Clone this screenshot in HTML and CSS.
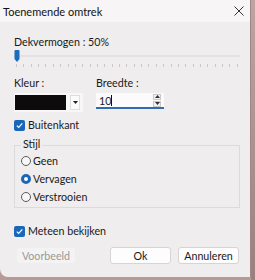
FILE: index.html
```html
<!DOCTYPE html>
<html lang="nl">
<head>
  <meta charset="UTF-8" />
  <title>Toenemende omtrek</title>
  <link rel="stylesheet" href="styles.css">
</head>
<body>
  <div class="screen">
    <div class="dialog">
      <div class="titlebar">
        <span class="title">Toenemende omtrek</span>
        <svg class="close" width="10" height="10" viewBox="0 0 10 10">
          <path d="M0.5 0.5 L9.5 9.5 M9.5 0.5 L0.5 9.5" stroke="#333" stroke-width="1" fill="none"/>
        </svg>
      </div>

      <div class="body">
        <div class="label opacity-label">Dekvermogen : 50%</div>
        <div class="slider">
          <div class="track"></div>
          <svg class="thumb" width="6" height="12" viewBox="0 0 6 12">
            <path d="M0.5 1 Q0.5 0 1.5 0 L4.5 0 Q5.5 0 5.5 1 L5.5 9 L3 12 L0.5 9 Z" fill="#1c6bbd"/>
          </svg>
          <div class="ticks" id="ticks"></div>
        </div>

        <div class="fields">
          <div class="field color-field">
            <div class="label">Kleur :</div>
            <div class="combo">
              <div class="swatch"></div>
              <div class="drop">
                <svg width="5" height="3" viewBox="0 0 5 3"><path d="M0 0 L5 0 L2.5 3 Z" fill="#222"/></svg>
              </div>
            </div>
          </div>
          <div class="field">
            <div class="label">Breedte :</div>
            <div class="spin">
              <span class="value">10</span><span class="caret"></span>
              <div class="spin-btns">
                <div class="spin-btn"><svg width="5" height="3" viewBox="0 0 5 3"><path d="M0 3 L5 3 L2.5 0 Z" fill="#333"/></svg></div>
                <div class="spin-btn"><svg width="5" height="3" viewBox="0 0 5 3"><path d="M0 0 L5 0 L2.5 3 Z" fill="#333"/></svg></div>
              </div>
            </div>
          </div>
        </div>

        <label class="check outside">
          <span class="box"><svg width="9" height="9" viewBox="0 0 9 9"><path d="M1.8 4.6 L3.7 6.4 L7.3 2.4" stroke="#fff" stroke-width="1.2" fill="none"/></svg></span>
          Buitenkant
        </label>

        <div class="group">
          <div class="group-title">Stijl</div>
          <div class="options">
            <label class="radio"><span class="dot"></span>Geen</label>
            <label class="radio on"><span class="dot"></span>Vervagen</label>
            <label class="radio"><span class="dot"></span>Verstrooien</label>
          </div>
        </div>

        <label class="check preview">
          <span class="box"><svg width="9" height="9" viewBox="0 0 9 9"><path d="M1.8 4.6 L3.7 6.4 L7.3 2.4" stroke="#fff" stroke-width="1.2" fill="none"/></svg></span>
          Meteen bekijken
        </label>

        <div class="buttons">
          <button class="btn disabled">Voorbeeld</button>
          <div class="right-buttons">
            <button class="btn">Ok</button>
            <button class="btn">Annuleren</button>
          </div>
        </div>
      </div>
    </div>
    <div class="backdrop"></div>
  </div>

  <script>
    // slider tick marks
    const ticks = document.getElementById('ticks');
    for (let i = 0; i < 31; i++) {
      const t = document.createElement('span');
      ticks.appendChild(t);
    }
  </script>
</body>
</html>
```

FILE: styles.css
```css
body {
  margin: 0;
  font-family: 'Lato', 'Noto Sans', sans-serif;
  font-size: 10.7px;
  color: #1a1a1a;
  background: #b69a98;
}

.screen {
  display: flex;
  width: 255px;
  height: 280px;
  overflow: hidden;
}

.dialog {
  width: 251px;
  height: 277px;
  flex: none;
  background: #efeded;
  border-right: 1px solid #a08684;
  border-bottom-left-radius: 8px;
  box-sizing: border-box;
  display: flex;
  flex-direction: column;
}

.backdrop {
  flex: 1;
  background: linear-gradient(#c2a3a1, #9c7f7d);
}

.titlebar {
  height: 22px;
  background: #f7f5f5;
  display: flex;
  align-items: center;
  justify-content: space-between;
  padding: 0 6px 0 3px;
  font-size: 11px;
  color: #111;
}

.body {
  padding: 0 10px 0 14px;
  flex: 1;
  display: flex;
  flex-direction: column;
}

.label {
  line-height: 14px;
}

.opacity-label {
  margin-top: 13px;
}

.slider {
  position: relative;
  height: 20px;
  margin-top: 1px;
}

.track {
  position: absolute;
  left: 0;
  right: 0;
  top: 5px;
  height: 2px;
  background: #e3e1e1;
}

.thumb {
  position: absolute;
  left: 0;
  top: 0;
}

.ticks {
  position: absolute;
  left: 2px;
  right: 2px;
  top: 14px;
  display: flex;
  justify-content: space-between;
}

.ticks span {
  width: 1px;
  height: 3px;
  background: #c9c7c7;
}

.fields {
  display: flex;
  margin-top: 6px;
}

.field .label {
  margin-bottom: 3px;
}

.color-field {
  width: 82px;
}

.combo {
  display: flex;
  align-items: center;
  width: 67px;
  height: 17px;
  padding: 1px;
  background: #f7f7f7;
}

.swatch {
  width: 51px;
  height: 15px;
  background: #0d0b0b;
}

.drop {
  width: 10px;
  height: 15px;
  margin-left: 4px;
  background: #fbfbfb;
  border: 1px solid #dedede;
  box-sizing: border-box;
  display: flex;
  align-items: center;
  justify-content: center;
}

.spin {
  display: flex;
  align-items: center;
  width: 68px;
  height: 14px;
  background: #fbfbfb;
  border-bottom: 2px solid #2f6cb4;
}

.value {
  margin-left: 3px;
}

.caret {
  width: 1px;
  height: 11px;
  background: #111;
}

.spin-btns {
  margin-left: auto;
  margin-right: 3px;
  display: flex;
  flex-direction: column;
  gap: 1px;
}

.spin-btn {
  width: 8px;
  height: 6px;
  background: #f2f2f2;
  border: 1px solid #c8c8c8;
  box-sizing: border-box;
  display: flex;
  align-items: center;
  justify-content: center;
}

.check {
  display: flex;
  align-items: center;
  gap: 3px;
  line-height: 14px;
}

.box {
  width: 11px;
  height: 11px;
  border-radius: 2px;
  background: #1a66b8;
  display: flex;
  align-items: center;
  justify-content: center;
}

.outside {
  margin-top: 6px;
}

.group {
  margin-top: 13px;
  border: 1px solid #dcdada;
  display: flex;
  flex-direction: column;
  align-items: flex-start;
}

.group-title {
  margin: -9px 0 0 6px;
  padding: 0 2px;
  line-height: 14px;
  background: #efeded;
}

.options {
  padding: 1px 0 1px 6px;
}

.radio {
  display: flex;
  align-items: center;
  gap: 2px;
  height: 18px;
  line-height: 14px;
}

.dot {
  width: 10px;
  height: 10px;
  border: 1px solid #5a5a5a;
  border-radius: 50%;
  box-sizing: border-box;
  background: #f7f7f7;
}

.radio.on .dot {
  border: 3px solid #1a66b8;
  background: #fff;
}

.preview {
  margin-top: 16px;
}

.buttons {
  display: flex;
  justify-content: space-between;
  margin-top: 9px;
  padding: 0 1px 0 2px;
}

.right-buttons {
  display: flex;
  gap: 7px;
}

.btn {
  font-family: inherit;
  font-size: 10.7px;
  height: 17px;
  width: 61px;
  padding: 0;
  background: #fdfdfd;
  border: 1px solid #d6d4d4;
  border-radius: 3px;
  color: #1a1a1a;
}

.btn.disabled {
  width: 60px;
  background: #f4f3f3;
  border-color: #efeded;
  color: #9a9898;
}
```
